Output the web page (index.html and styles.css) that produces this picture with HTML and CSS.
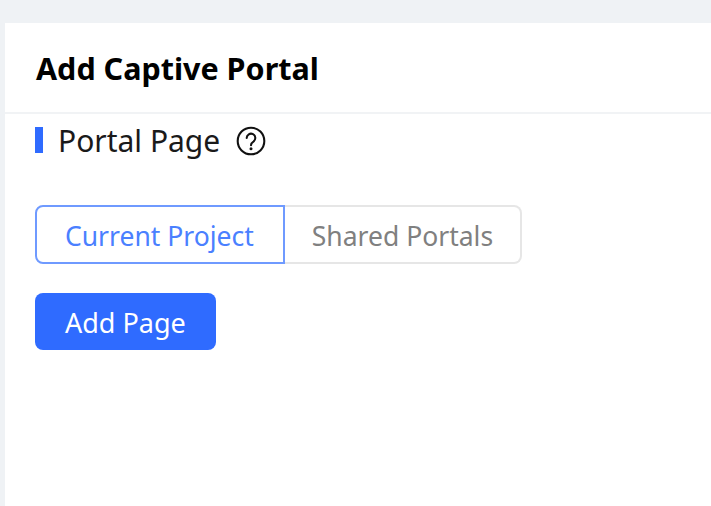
FILE: index.html
```html
<!DOCTYPE html>
<html lang="en">
<head>
    <meta charset="UTF-8">
    <meta name="viewport" content="width=device-width, initial-scale=1.0">
    <title>Add Captive Portal</title>
    <link rel="stylesheet" href="styles.css">
</head>
<body>

    <div class="panel">
        <div class="panel-header">
            <h1>Add Captive Portal</h1>
        </div>

        <div class="panel-body">
            <div class="section-title">
                <span class="section-mark"></span>
                <h2>Portal Page</h2>
                <svg class="help-icon" viewBox="0 0 32 32" width="30" height="30" fill="none" stroke="#111" stroke-width="2.2">
                    <circle cx="16" cy="16" r="14.2"/>
                    <path d="M11.4 12.8a4.6 4.6 0 1 1 7.2 3.8c-1.7 1.1-2.6 2-2.6 3.8" stroke-linecap="round"/>
                    <circle cx="16" cy="24.2" r="1.6" fill="#111" stroke="none"/>
                </svg>
            </div>

            <div class="tabs">
                <button class="tab tab-active">Current Project</button>
                <button class="tab tab-other">Shared Portals</button>
            </div>

            <button class="add-btn">Add Page</button>
        </div>
    </div>

</body>
</html>
```

FILE: styles.css
```css
html, body {
    height: 100%;
}

body {
    margin: 0;
    padding: 23px 0 0 5px;
    box-sizing: border-box;
    overflow: hidden;
    font-family: "Noto Sans", "Open Sans", sans-serif;
    background-color: #eff2f5;
    color: #111;
}

.panel {
    height: 100%;
    background-color: #fff;
}

.panel-header {
    height: 89px;
    padding-left: 30px;
    display: flex;
    align-items: center;
    border-bottom: 2px solid #f1f3f5;
}

h1 {
    margin: 0 0 0 1px;
    font-size: 30.5px;
    font-weight: 700;
    color: #000;
}

.panel-body {
    padding-left: 30px;
}

.section-title {
    height: 52px;
    display: flex;
    align-items: center;
}

.section-mark {
    width: 8px;
    height: 26px;
    background-color: #2f6bff;
    margin-right: 15px;
}

h2 {
    margin: 1px 0 0;
    font-size: 30px;
    font-weight: 400;
    color: #1a1a1a;
}

.help-icon {
    margin: 2px 0 0 16px;
}

.tabs {
    display: flex;
    margin-top: 39px;
}

.tab {
    height: 59px;
    padding-top: 4px;
    font-family: inherit;
    font-size: 26.5px;
    background-color: #fff;
}

.tab-active {
    padding-left: 28px;
    padding-right: 29px;
    border: 2px solid #6f9aff;
    border-radius: 8px 0 0 8px;
    color: #4a80ff;
}

.tab-other {
    padding-left: 27px;
    padding-right: 27px;
    border: 2px solid #e6e6e6;
    border-left: 0;
    border-radius: 0 8px 8px 0;
    color: #808080;
}

.add-btn {
    display: block;
    height: 57px;
    margin-top: 29px;
    padding: 2px 30px 0;
    border: 0;
    border-radius: 8px;
    font-family: inherit;
    font-size: 27px;
    color: #fff;
    background-color: #2f6bff;
}
```
